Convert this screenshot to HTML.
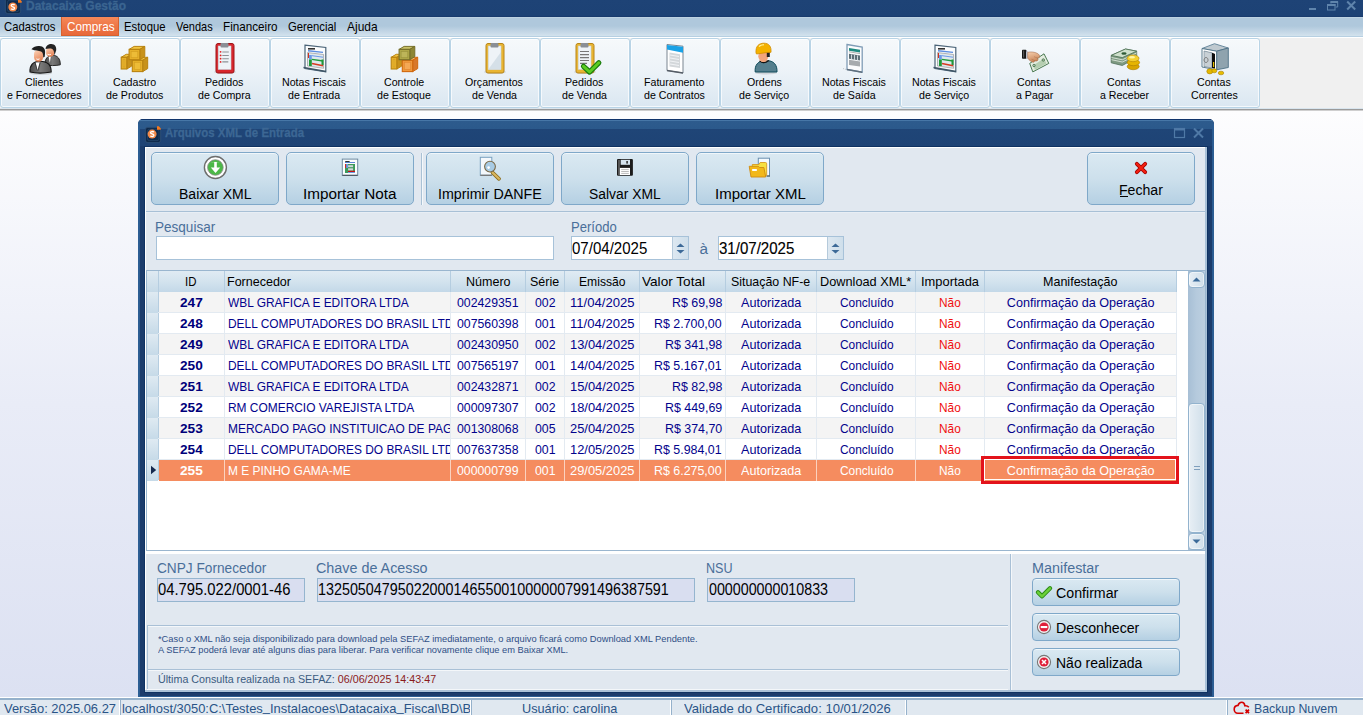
<!DOCTYPE html><html><head><meta charset="utf-8"><style>
*{box-sizing:border-box;margin:0;padding:0}
html,body{width:1363px;height:715px;overflow:hidden;background:#fff}
body{position:relative;font-family:"Liberation Sans",sans-serif;color:#000}
.a{position:absolute}
.t{position:absolute;white-space:nowrap;line-height:1}
svg{position:absolute;overflow:visible}
</style></head><body><div class="a" style="left:0px;top:110px;width:1363px;height:587px;background:linear-gradient(#fdfdfe,#e9ecf7 50%,#dce1f2)"></div>
<div class="a" style="left:0px;top:0px;width:1363px;height:17px;background:linear-gradient(#1e4376,#1d4275 90%,#16386a)"></div>
<svg style="left:4px;top:-3px" width="18" height="18"><rect x="1.3" y="1.3" width="15.4" height="15.4" rx="2.5" fill="#0f2a4c" stroke="#2f527a" stroke-width="0.9"/><rect x="3.5" y="3.3" width="11.5" height="11.3" rx="2" fill="none" stroke="#27496f" stroke-width="0.7"/><circle cx="8.8" cy="10" r="4.5" fill="#f38a4a"/><path d="M10.6 8c-.7-.8-3.4-.9-3.4.6 0 1.5 3.4.9 3.4 2.6 0 1.5-2.7 1.5-3.6.6" stroke="#fff" stroke-width="1.3" fill="none"/><path d="M14 2.3h1.8l1.9 1.9v1.6h-3.7z" fill="#f5781e"/></svg>
<div class="t" style="left:26.00px;top:0.00px;font-size:12.4px;color:#3b6591;font-weight:700;transform:scaleX(0.9679);transform-origin:0 0;-webkit-text-stroke:0.3px #3b6591">Datacaixa Gestão</div>
<svg style="left:1300px;top:0" width="63" height="17"><rect x="9" y="8" width="7" height="2" fill="#5f84ac"/><path d="M31 3.5V1.5h6.7v5.5h-2" fill="none" stroke="#5f84ac" stroke-width="1"/><rect x="30.5" y="1" width="7.5" height="2" fill="#5f84ac"/><rect x="27.5" y="4.5" width="7.5" height="5.5" fill="#1d4275" stroke="#5f84ac" stroke-width="1"/><rect x="27" y="4" width="8.5" height="2" fill="#5f84ac"/><path d="M47.2 1.5l8 8M55.2 1.5l-8 8" stroke="#5f84ac" stroke-width="2"/></svg>
<div class="a" style="left:0px;top:17px;width:1363px;height:19px;background:linear-gradient(#bdd2e2 0px,#bdd2e2 1px,#afc8dc 1px,#afc8dc 9px,#d3e2ed 19px)"></div>
<div class="a" style="left:0px;top:36px;width:1363px;height:1px;background:#b7d0e2"></div>
<div class="a" style="left:0px;top:37px;width:1363px;height:1px;background:#ffffff"></div>
<div class="a" style="left:61px;top:17px;width:58px;height:19px;background:linear-gradient(#f5895a,#ee7646 50%,#e8693a);border:1px solid #d7622f;border-top:none"></div>
<div class="t" style="left:4.40px;top:21.00px;font-size:12.6px;color:#000;font-weight:400;transform:scaleX(0.8954);transform-origin:0 0;">Cadastros</div>
<div class="t" style="left:66.50px;top:21.00px;font-size:12.6px;color:#fff;font-weight:400;transform:scaleX(0.9297);transform-origin:0 0;">Compras</div>
<div class="t" style="left:124.40px;top:21.00px;font-size:12.6px;color:#000;font-weight:400;transform:scaleX(0.8979);transform-origin:0 0;">Estoque</div>
<div class="t" style="left:176.00px;top:21.00px;font-size:12.6px;color:#000;font-weight:400;transform:scaleX(0.8732);transform-origin:0 0;">Vendas</div>
<div class="t" style="left:223.40px;top:21.00px;font-size:12.6px;color:#000;font-weight:400;transform:scaleX(0.9284);transform-origin:0 0;">Financeiro</div>
<div class="t" style="left:288.30px;top:21.00px;font-size:12.6px;color:#000;font-weight:400;transform:scaleX(0.8960);transform-origin:0 0;">Gerencial</div>
<div class="t" style="left:346.90px;top:21.00px;font-size:12.6px;color:#000;font-weight:400;transform:scaleX(0.9498);transform-origin:0 0;">Ajuda</div>
<div class="a" style="left:0px;top:38px;width:1363px;height:71px;background:#f0f0f0"></div>
<div class="a" style="left:0px;top:38px;width:90px;height:70px;border:1px solid #b9d4e6;border-radius:3px;background:linear-gradient(#f6f9fb,#edf3f8 45%,#dae7f1);box-shadow:inset 0 0 0 1px rgba(255,255,255,0.7)"></div>
<div class="t" style="left:24.98px;top:77.00px;font-size:11.5px;color:#000;font-weight:400;transform:scaleX(0.9250);transform-origin:0 0;">Clientes</div>
<div class="t" style="left:6.95px;top:90.00px;font-size:11.5px;color:#000;font-weight:400;transform:scaleX(0.9250);transform-origin:0 0;">e Fornecedores</div>
<div class="a" style="left:90px;top:38px;width:90px;height:70px;border:1px solid #b9d4e6;border-radius:3px;background:linear-gradient(#f6f9fb,#edf3f8 45%,#dae7f1);box-shadow:inset 0 0 0 1px rgba(255,255,255,0.7)"></div>
<div class="t" style="left:112.61px;top:77.00px;font-size:11.5px;color:#000;font-weight:400;transform:scaleX(0.9250);transform-origin:0 0;">Cadastro</div>
<div class="t" style="left:105.52px;top:90.00px;font-size:11.5px;color:#000;font-weight:400;transform:scaleX(0.9250);transform-origin:0 0;">de Produtos</div>
<div class="a" style="left:180px;top:38px;width:90px;height:70px;border:1px solid #b9d4e6;border-radius:3px;background:linear-gradient(#f6f9fb,#edf3f8 45%,#dae7f1);box-shadow:inset 0 0 0 1px rgba(255,255,255,0.7)"></div>
<div class="t" style="left:204.98px;top:77.00px;font-size:11.5px;color:#000;font-weight:400;transform:scaleX(0.9250);transform-origin:0 0;">Pedidos</div>
<div class="t" style="left:197.89px;top:90.00px;font-size:11.5px;color:#000;font-weight:400;transform:scaleX(0.9250);transform-origin:0 0;">de Compra</div>
<div class="a" style="left:270px;top:38px;width:90px;height:70px;border:1px solid #b9d4e6;border-radius:3px;background:linear-gradient(#f6f9fb,#edf3f8 45%,#dae7f1);box-shadow:inset 0 0 0 1px rgba(255,255,255,0.7)"></div>
<div class="t" style="left:282.27px;top:77.00px;font-size:11.5px;color:#000;font-weight:400;transform:scaleX(0.9250);transform-origin:0 0;">Notas Fiscais</div>
<div class="t" style="left:288.18px;top:90.00px;font-size:11.5px;color:#000;font-weight:400;transform:scaleX(0.9250);transform-origin:0 0;">de Entrada</div>
<div class="a" style="left:360px;top:38px;width:90px;height:70px;border:1px solid #b9d4e6;border-radius:3px;background:linear-gradient(#f6f9fb,#edf3f8 45%,#dae7f1);box-shadow:inset 0 0 0 1px rgba(255,255,255,0.7)"></div>
<div class="t" style="left:384.10px;top:77.00px;font-size:11.5px;color:#000;font-weight:400;transform:scaleX(0.9250);transform-origin:0 0;">Controle</div>
<div class="t" style="left:377.29px;top:90.00px;font-size:11.5px;color:#000;font-weight:400;transform:scaleX(0.9250);transform-origin:0 0;">de Estoque</div>
<div class="a" style="left:450px;top:38px;width:90px;height:70px;border:1px solid #b9d4e6;border-radius:3px;background:linear-gradient(#f6f9fb,#edf3f8 45%,#dae7f1);box-shadow:inset 0 0 0 1px rgba(255,255,255,0.7)"></div>
<div class="t" style="left:465.23px;top:77.00px;font-size:11.5px;color:#000;font-weight:400;transform:scaleX(0.9250);transform-origin:0 0;">Orçamentos</div>
<div class="t" style="left:471.72px;top:90.00px;font-size:11.5px;color:#000;font-weight:400;transform:scaleX(0.9250);transform-origin:0 0;">de Venda</div>
<div class="a" style="left:540px;top:38px;width:90px;height:70px;border:1px solid #b9d4e6;border-radius:3px;background:linear-gradient(#f6f9fb,#edf3f8 45%,#dae7f1);box-shadow:inset 0 0 0 1px rgba(255,255,255,0.7)"></div>
<div class="t" style="left:564.98px;top:77.00px;font-size:11.5px;color:#000;font-weight:400;transform:scaleX(0.9250);transform-origin:0 0;">Pedidos</div>
<div class="t" style="left:561.72px;top:90.00px;font-size:11.5px;color:#000;font-weight:400;transform:scaleX(0.9250);transform-origin:0 0;">de Venda</div>
<div class="a" style="left:630px;top:38px;width:90px;height:70px;border:1px solid #b9d4e6;border-radius:3px;background:linear-gradient(#f6f9fb,#edf3f8 45%,#dae7f1);box-shadow:inset 0 0 0 1px rgba(255,255,255,0.7)"></div>
<div class="t" style="left:644.04px;top:77.00px;font-size:11.5px;color:#000;font-weight:400;transform:scaleX(0.9250);transform-origin:0 0;">Faturamento</div>
<div class="t" style="left:643.74px;top:90.00px;font-size:11.5px;color:#000;font-weight:400;transform:scaleX(0.9250);transform-origin:0 0;">de Contratos</div>
<div class="a" style="left:720px;top:38px;width:90px;height:70px;border:1px solid #b9d4e6;border-radius:3px;background:linear-gradient(#f6f9fb,#edf3f8 45%,#dae7f1);box-shadow:inset 0 0 0 1px rgba(255,255,255,0.7)"></div>
<div class="t" style="left:746.76px;top:77.00px;font-size:11.5px;color:#000;font-weight:400;transform:scaleX(0.9250);transform-origin:0 0;">Ordens</div>
<div class="t" style="left:739.07px;top:90.00px;font-size:11.5px;color:#000;font-weight:400;transform:scaleX(0.9250);transform-origin:0 0;">de Serviço</div>
<div class="a" style="left:810px;top:38px;width:90px;height:70px;border:1px solid #b9d4e6;border-radius:3px;background:linear-gradient(#f6f9fb,#edf3f8 45%,#dae7f1);box-shadow:inset 0 0 0 1px rgba(255,255,255,0.7)"></div>
<div class="t" style="left:822.27px;top:77.00px;font-size:11.5px;color:#000;font-weight:400;transform:scaleX(0.9250);transform-origin:0 0;">Notas Fiscais</div>
<div class="t" style="left:832.90px;top:90.00px;font-size:11.5px;color:#000;font-weight:400;transform:scaleX(0.9250);transform-origin:0 0;">de Saída</div>
<div class="a" style="left:900px;top:38px;width:90px;height:70px;border:1px solid #b9d4e6;border-radius:3px;background:linear-gradient(#f6f9fb,#edf3f8 45%,#dae7f1);box-shadow:inset 0 0 0 1px rgba(255,255,255,0.7)"></div>
<div class="t" style="left:912.27px;top:77.00px;font-size:11.5px;color:#000;font-weight:400;transform:scaleX(0.9250);transform-origin:0 0;">Notas Fiscais</div>
<div class="t" style="left:919.07px;top:90.00px;font-size:11.5px;color:#000;font-weight:400;transform:scaleX(0.9250);transform-origin:0 0;">de Serviço</div>
<div class="a" style="left:990px;top:38px;width:90px;height:70px;border:1px solid #b9d4e6;border-radius:3px;background:linear-gradient(#f6f9fb,#edf3f8 45%,#dae7f1);box-shadow:inset 0 0 0 1px rgba(255,255,255,0.7)"></div>
<div class="t" style="left:1017.35px;top:77.00px;font-size:11.5px;color:#000;font-weight:400;transform:scaleX(0.9250);transform-origin:0 0;">Contas</div>
<div class="t" style="left:1015.57px;top:90.00px;font-size:11.5px;color:#000;font-weight:400;transform:scaleX(0.9250);transform-origin:0 0;">a Pagar</div>
<div class="a" style="left:1080px;top:38px;width:90px;height:70px;border:1px solid #b9d4e6;border-radius:3px;background:linear-gradient(#f6f9fb,#edf3f8 45%,#dae7f1);box-shadow:inset 0 0 0 1px rgba(255,255,255,0.7)"></div>
<div class="t" style="left:1107.35px;top:77.00px;font-size:11.5px;color:#000;font-weight:400;transform:scaleX(0.9250);transform-origin:0 0;">Contas</div>
<div class="t" style="left:1099.66px;top:90.00px;font-size:11.5px;color:#000;font-weight:400;transform:scaleX(0.9250);transform-origin:0 0;">a Receber</div>
<div class="a" style="left:1170px;top:38px;width:90px;height:70px;border:1px solid #b9d4e6;border-radius:3px;background:linear-gradient(#f6f9fb,#edf3f8 45%,#dae7f1);box-shadow:inset 0 0 0 1px rgba(255,255,255,0.7)"></div>
<div class="t" style="left:1197.35px;top:77.00px;font-size:11.5px;color:#000;font-weight:400;transform:scaleX(0.9250);transform-origin:0 0;">Contas</div>
<div class="t" style="left:1190.84px;top:90.00px;font-size:11.5px;color:#000;font-weight:400;transform:scaleX(0.9250);transform-origin:0 0;">Correntes</div>
<div class="a" style="left:0px;top:108px;width:1363px;height:1px;background:#d9e5ee"></div>
<div class="a" style="left:0px;top:109px;width:1363px;height:1px;background:#9a9a9a"></div>
<div class="a" style="left:0px;top:110px;width:1363px;height:1px;background:#cfcfcf"></div>
<svg style="left:20px;top:40px" width="50" height="38" viewBox="0 0 50 38">
<defs><linearGradient id="fg1" x1="0" y1="0" x2="0.4" y2="1"><stop offset="0" stop-color="#fdd5ba"/><stop offset="1" stop-color="#e5865a"/></linearGradient>
<linearGradient id="bd1" x1="0" y1="0" x2="1" y2="0"><stop offset="0" stop-color="#4a4a4a"/><stop offset="0.5" stop-color="#7a7a7a"/><stop offset="1" stop-color="#555"/></linearGradient></defs>
<ellipse cx="21" cy="33.3" rx="11" ry="1.6" fill="#b8bcc0" opacity="0.6"/>
<path d="M24.8 25C24.6 19 27.8 15.2 32.5 15.2 37.5 15.2 40.5 19 40.3 24.8 37 25.8 28 25.8 24.8 25z" fill="url(#bd1)" stroke="#1a1a1a" stroke-width="0.9"/>
<path d="M28.6 16.5L29.8 22.7 30.9 16.5z" fill="#fff"/>
<path d="M26.2 10.5C26.2 8 28.3 7.4 30.2 7.4 32.5 7.4 34.2 8.8 34.2 11.5V13.5C34.2 15.5 32.3 16.7 30.2 16.7 28 16.7 26.2 15.3 26.2 13.3z" fill="url(#fg1)"/>
<path d="M27.5 14.3q1.8 .9 3.5 0" stroke="#fff" stroke-width="0.9" fill="none"/>
<path d="M25.6 9C25.8 5.6 28.5 4 31.3 4 34.8 4 36.6 6.8 36.2 10.2L35.2 13.3 34.3 15.2C34.3 11.5 33.6 9.2 31 8.6 29 8.2 27 8.6 25.6 9z" fill="#242424"/>
<path d="M10 32C9.6 25.5 12.8 21.2 20 21.2 27.5 21.2 31.3 25 31.2 32 25 33.2 15 33.2 10 32z" fill="url(#bd1)" stroke="#141414" stroke-width="1.1"/>
<path d="M15.6 22.4L17.6 30.7 19.6 22.4z" fill="#fff"/>
<path d="M15 22.5L17.3 30.5M20.2 22.5L18 30.5" stroke="#222" stroke-width="0.7"/>
<path d="M14 14C14 11 16 10 18.5 10S23.1 11.2 23.1 14V17.5C23.1 20 21 21.7 18.5 21.7S14 20 14 17.5z" fill="url(#fg1)"/>
<path d="M16.3 18.9q1.6 1 3.3 0" stroke="#fff" stroke-width="1" fill="none"/>
<path d="M11.4 9.3C13.5 6.5 16.5 5.8 19.3 6 23.5 6.3 25.4 8.8 25.1 12.5L24.7 16.8 23.2 17.5C23.3 14.5 22.8 12 21 11.4 18.5 10.6 15.5 10.9 11.4 9.3z" fill="#202020"/>
</svg>
<svg style="left:110px;top:40px" width="50" height="38" viewBox="0 0 50 38"><path d="M11.2 17.3L16.2 14.3H21.8L16.8 17.3z" fill="#f2c542" stroke="#b98310" stroke-width="1" stroke-linejoin="round"/><path d="M16.8 17.3L21.8 14.3V26.0L16.8 29z" fill="#c8921a" stroke="#b98310" stroke-width="1" stroke-linejoin="round"/><rect x="11.2" y="17.3" width="5.600000000000001" height="11.7" fill="#e7b12a" stroke="#b98310" stroke-width="1.1"/><rect x="13.2" y="19.3" width="1.6000000000000014" height="7.699999999999999" fill="#f2c542" opacity="0.55" stroke="#c8921a" stroke-width="0.7"/><path d="M22.3 20.3L27.3 17.3H37.7L32.7 20.3z" fill="#f2c542" stroke="#b98310" stroke-width="1" stroke-linejoin="round"/><path d="M32.7 20.3L37.7 17.3V28.6L32.7 31.6z" fill="#c8921a" stroke="#b98310" stroke-width="1" stroke-linejoin="round"/><rect x="22.3" y="20.3" width="10.400000000000002" height="11.3" fill="#e7b12a" stroke="#b98310" stroke-width="1.1"/><rect x="24.3" y="22.3" width="6.400000000000002" height="7.300000000000001" fill="#f2c542" opacity="0.55" stroke="#c8921a" stroke-width="0.7"/><path d="M19.1 9.4L24.1 6.4H34.8L29.799999999999997 9.4z" fill="#f2c542" stroke="#b98310" stroke-width="1" stroke-linejoin="round"/><path d="M29.799999999999997 9.4L34.8 6.4V16.7L29.799999999999997 19.7z" fill="#c8921a" stroke="#b98310" stroke-width="1" stroke-linejoin="round"/><rect x="19.1" y="9.4" width="10.699999999999996" height="10.299999999999999" fill="#e7b12a" stroke="#b98310" stroke-width="1.1"/><rect x="21.1" y="11.4" width="6.699999999999996" height="6.299999999999999" fill="#f2c542" opacity="0.55" stroke="#c8921a" stroke-width="0.7"/></svg>
<svg style="left:200px;top:40px" width="50" height="38" viewBox="0 0 50 38">
<ellipse cx="25" cy="32" rx="11" ry="2" fill="#c8ccd0" opacity="0.7"/>
<rect x="16" y="3.5" width="18" height="29.5" rx="2" fill="#d8262c" stroke="#9e1418" stroke-width="1"/>
<rect x="18.2" y="6" width="12.8" height="23.4" fill="#eef3f7" stroke="#c9d5de" stroke-width="0.6"/>

<circle cx="20.6" cy="11.8" r="0.9" fill="#e02020"/><circle cx="20.6" cy="15.4" r="0.9" fill="#e02020"/><circle cx="20.6" cy="18.7" r="0.9" fill="#e02020"/><circle cx="20.6" cy="21.9" r="0.9" fill="#e02020"/>
<path d="M22.3 12h6.5M22.3 15.5h6.5M22.3 18.7h6.5M22.3 21.9h6" stroke="#8c9296" stroke-width="1.1"/>
<rect x="20.5" y="3" width="8" height="4.5" rx="1" fill="#8a8f96"/></svg>
<svg style="left:290px;top:40px" width="50" height="38" viewBox="0 0 50 38">
<path d="M15 5.2L35.8 7.5V31.8L15 28.5z" fill="#fbfcfd" stroke="#4b6478" stroke-width="1.2"/>
<path d="M13.5 27.5L36 31.5" stroke="#3f5566" stroke-width="1.6"/>
<rect x="18" y="8" width="7" height="1.6" fill="#333"/>
<path d="M18 10.8L33 12.4" stroke="#5d8ee0" stroke-width="1.4"/>
<path d="M17.5 12.6L33.6 14.5V28.3L17.5 26z" fill="#dfe8ee" stroke="#888" stroke-width="0.6"/>
<rect x="19" y="15" width="2.8" height="4.5" fill="#6a9ae8"/>
<rect x="19" y="19.5" width="2.8" height="6.5" fill="#1f9a3a"/>
<rect x="18" y="13" width="1" height="5" fill="#d03020"/>
<path d="M22 19.3L33 21" stroke="#1f9a3a" stroke-width="1.3"/>
<rect x="31.5" y="19.5" width="2" height="5.5" fill="#1f9a3a"/>
<path d="M22 23.5L33 25.8" stroke="#d83a20" stroke-width="1.6"/>
<path d="M22 15.7L33 17.2" stroke="#6a9ae8" stroke-width="1"/>
</svg>
<svg style="left:380px;top:40px" width="50" height="38" viewBox="0 0 50 38"><path d="M11.2 17.3L16.2 14.3H21.8L16.8 17.3z" fill="#f2c542" stroke="#b98310" stroke-width="1" stroke-linejoin="round"/><path d="M16.8 17.3L21.8 14.3V26.0L16.8 29z" fill="#c8921a" stroke="#b98310" stroke-width="1" stroke-linejoin="round"/><rect x="11.2" y="17.3" width="5.600000000000001" height="11.7" fill="#e7b12a" stroke="#b98310" stroke-width="1.1"/><rect x="13.2" y="19.3" width="1.6000000000000014" height="7.699999999999999" fill="#f2c542" opacity="0.55" stroke="#c8921a" stroke-width="0.7"/><path d="M22.3 20.3L27.3 17.3H37.7L32.7 20.3z" fill="#f7b56a" stroke="#d0680e" stroke-width="1" stroke-linejoin="round"/><path d="M32.7 20.3L37.7 17.3V28.6L32.7 31.6z" fill="#d8782a" stroke="#d0680e" stroke-width="1" stroke-linejoin="round"/><rect x="22.3" y="20.3" width="10.400000000000002" height="11.3" fill="#f19a3c" stroke="#d0680e" stroke-width="1.1"/><rect x="24.3" y="22.3" width="6.400000000000002" height="7.300000000000001" fill="#f7b56a" opacity="0.55" stroke="#d8782a" stroke-width="0.7"/><path d="M19.1 9.4L24.1 6.4H34.8L29.799999999999997 9.4z" fill="#c9c168" stroke="#77702a" stroke-width="1" stroke-linejoin="round"/><path d="M29.799999999999997 9.4L34.8 6.4V16.7L29.799999999999997 19.7z" fill="#8d8634" stroke="#77702a" stroke-width="1" stroke-linejoin="round"/><rect x="19.1" y="9.4" width="10.699999999999996" height="10.299999999999999" fill="#b0a848" stroke="#77702a" stroke-width="1.1"/><rect x="21.1" y="11.4" width="6.699999999999996" height="6.299999999999999" fill="#c9c168" opacity="0.55" stroke="#8d8634" stroke-width="0.7"/></svg>
<svg style="left:470px;top:40px" width="50" height="38" viewBox="0 0 50 38">
<ellipse cx="25" cy="32" rx="11" ry="2" fill="#c8ccd0" opacity="0.7"/>
<rect x="16" y="3.5" width="18" height="29.5" rx="2" fill="#e9b532" stroke="#b8861a" stroke-width="1"/>
<rect x="18.2" y="6" width="12.8" height="23.4" fill="#eef3f7" stroke="#c9d5de" stroke-width="0.6"/>
<path d="M18.2 29.4L31 12V29.4z" fill="#d5e0e8"/>
<rect x="20.5" y="3" width="8" height="4.5" rx="1" fill="#8a8f96"/></svg>
<svg style="left:560px;top:40px" width="50" height="38" viewBox="0 0 50 38">
<ellipse cx="25" cy="32" rx="11" ry="2" fill="#c8ccd0" opacity="0.7"/>
<rect x="16" y="3.5" width="18" height="29.5" rx="2" fill="#e9b532" stroke="#b8861a" stroke-width="1"/>
<rect x="18.2" y="6" width="12.8" height="23.4" fill="#eef3f7" stroke="#c9d5de" stroke-width="0.6"/>
<path d="M20 11.5h9M20 14.6h9M20 17.6h9M20 20.5h9M20 23.4h7" stroke="#777" stroke-width="1.1"/>
<rect x="20.5" y="3" width="8" height="4.5" rx="1" fill="#8a8f96"/><path d="M23.5 26.3L29.6 32 38.8 22.8" fill="none" stroke="#177a0c" stroke-width="5.2" stroke-linejoin="round" stroke-linecap="round"/><path d="M23.5 26.3L29.6 32 38.8 22.8" fill="none" stroke="#5ccc22" stroke-width="3" stroke-linejoin="round" stroke-linecap="round"/></svg>
<svg style="left:650px;top:40px" width="50" height="38" viewBox="0 0 50 38">
<path d="M17 4.5L33 6.2V33L17 30.5z" fill="#fff" stroke="#7a8590" stroke-width="1"/>
<path d="M17 5L33 6.8V12.8L17 9.5z" fill="#1aa2e6"/>
<path d="M19.5 12.5L30 14.3V28L19.5 26.5z" fill="#c4c9ce" opacity="0.75"/>
<path d="M20 15l9 1.5M20 18l9 1.5M20 21l9 1.5M20 24l9 1.5" stroke="#f4f6f8" stroke-width="0.9"/>
<path d="M17 30.5L33 33" stroke="#555d66" stroke-width="1.4"/>
</svg>
<svg style="left:740px;top:40px" width="50" height="38" viewBox="0 0 50 38">
<ellipse cx="26" cy="33" rx="11" ry="1.5" fill="#c4c8cc" opacity="0.7"/>
<path d="M15.2 32C14.5 25 18 20.5 26 20.5S37.3 25 37 32z" fill="#557f8e" stroke="#0e4b5a" stroke-width="1"/>
<path d="M19.5 20.8Q23.5 24.5 28.8 20.5" stroke="#111" stroke-width="1.1" fill="#f5c09a"/>
<ellipse cx="23.3" cy="16.3" rx="5" ry="5.6" fill="#f3a47b"/>
<rect x="26.8" y="12" width="3" height="5" fill="#222"/>
<path d="M16 12.8C15.5 6 19 3.2 24 3.2S31.5 6.5 31 12.3L27 12.5 16.5 14z" fill="#f4b200" stroke="#d08c00" stroke-width="0.8"/>
<path d="M19 6.5Q21 4.5 24 4.8" stroke="#fff5a0" stroke-width="1.2" fill="none"/>
</svg>
<svg style="left:830px;top:40px" width="50" height="38" viewBox="0 0 50 38">
<path d="M13 28.5L18 30" stroke="#c0c4c8" stroke-width="1" stroke-dasharray="1 1"/>
<path d="M17 4.5L32.2 7V32.2L17 29.5z" fill="#fbfcfd" stroke="#7f9cb6" stroke-width="1.3"/>
<path d="M17 29.5L32.2 32.2" stroke="#5e6e7c" stroke-width="1.5"/>
<path d="M19 8L30 9.8V12.5L19 10.8z" fill="#1e8a80"/>
<path d="M19 11.8L30 13.6" stroke="#999" stroke-width="0.8"/>
<path d="M19 13.8L30 15.6V20.5L19 18.8z" fill="#5c6e76"/>
<path d="M21.5 14.5V19.5M24.5 15V20M27.5 15.5V20.5" stroke="#d8e0e4" stroke-width="0.9"/>
<path d="M19 19.8L30 21.6V26.6L19 25z" fill="#a7abae"/>
</svg>
<svg style="left:920px;top:40px" width="50" height="38" viewBox="0 0 50 38">
<path d="M15 5.2L35.8 7.5V31.8L15 28.5z" fill="#fbfcfd" stroke="#4b6478" stroke-width="1.2"/>
<path d="M13.5 27.5L36 31.5" stroke="#3f5566" stroke-width="1.6"/>
<rect x="18" y="8" width="7" height="1.6" fill="#333"/>
<path d="M18 10.8L33 12.4" stroke="#5d8ee0" stroke-width="1.4"/>
<path d="M17.5 12.6L33.6 14.5V28.3L17.5 26z" fill="#dfe8ee" stroke="#888" stroke-width="0.6"/>
<rect x="19" y="15" width="2.8" height="4.5" fill="#6a9ae8"/>
<rect x="19" y="19.5" width="2.8" height="6.5" fill="#1f9a3a"/>
<rect x="18" y="13" width="1" height="5" fill="#d03020"/>
<path d="M22 19.3L33 21" stroke="#1f9a3a" stroke-width="1.3"/>
<rect x="31.5" y="19.5" width="2" height="5.5" fill="#1f9a3a"/>
<path d="M22 23.5L33 25.8" stroke="#d83a20" stroke-width="1.6"/>
<path d="M22 15.7L33 17.2" stroke="#6a9ae8" stroke-width="1"/>
</svg>
<svg style="left:1010px;top:40px" width="50" height="38" viewBox="0 0 50 38">
<path d="M19.7 23.4L34 13.8 38.8 23.4 22.8 31.9z" fill="#e3ecdf" stroke="#4b7a52" stroke-width="1"/>
<path d="M23 25.5L34 18.5 36.5 23.5 25 29.8z" fill="#a9c7a4" opacity="0.8"/>
<circle cx="24" cy="25.5" r="1.2" fill="none" stroke="#3f6a45" stroke-width="0.8"/>
<circle cx="33.3" cy="20" r="1.2" fill="none" stroke="#3f6a45" stroke-width="0.8"/>
<defs><linearGradient id="hg1" x1="0" y1="0" x2="0.3" y2="1"><stop offset="0" stop-color="#f6cfae"/><stop offset="1" stop-color="#c98558"/></linearGradient></defs>
<rect x="12" y="9.8" width="4.4" height="9" rx="0.8" fill="#151515"/>
<rect x="13" y="10.5" width="1.2" height="7" fill="#555"/>
<rect x="16.3" y="11.6" width="1.5" height="6.6" fill="#e8eef4" stroke="#99a" stroke-width="0.4"/>
<path d="M17.7 12.3C20.5 11.6 24.5 11.9 27.2 13.3 28.9 14.2 29.9 15.6 29.6 16.9 29.3 18 28.2 18.2 27.3 17.9 28.3 18.8 28.2 20.3 27 20.9 26.2 21.3 25.2 21.1 24.5 20.7 24.8 21.6 24.1 22.3 23 22.2 21.2 22 19.2 20.2 17.7 18.3z" fill="url(#hg1)" stroke="#9a6040" stroke-width="0.5"/>
<path d="M24.5 20.6C23.5 20 22.5 19.5 21.5 19.2M27.2 17.9C26 17.6 25 17.2 24 16.6" stroke="#a86a48" stroke-width="0.5" fill="none"/>
</svg>
<svg style="left:1100px;top:40px" width="50" height="38" viewBox="0 0 50 38">
<path d="M11.2 15.4L25.5 9 36.7 11.2V17.5L22.3 25.5 11.2 22.8z" fill="#7e9a82" stroke="#51705a" stroke-width="0.8"/>
<path d="M11.2 15.4L25.5 9 36.7 11.2 22.3 17.6z" fill="#cfe0cc" stroke="#4b7052" stroke-width="0.8"/>
<path d="M11.5 17.5L22.3 19.8 36.5 13M11.5 19.7L22.3 22 36.5 15.2" stroke="#e8f0e6" stroke-width="0.8" fill="none"/>
<ellipse cx="24" cy="13.5" rx="2.6" ry="1.2" fill="#2e5a36"/>
<ellipse cx="33.2" cy="26.5" rx="6" ry="3.2" fill="#d9a500" stroke="#a87a00" stroke-width="0.6"/>
<ellipse cx="33.4" cy="22.5" rx="6.2" ry="3.2" fill="#e6b400" stroke="#a87a00" stroke-width="0.6"/>
<ellipse cx="33" cy="18.3" rx="6" ry="3.4" fill="#f5d030" stroke="#b08200" stroke-width="0.6"/>
<ellipse cx="32" cy="17.3" rx="3" ry="1.3" fill="#fff3a0"/>
</svg>
<svg style="left:1190px;top:40px" width="50" height="38" viewBox="0 0 50 38">
<path d="M12 8.5L24.5 3.7 38.3 8 26.6 11.2z" fill="#bfc9cf" stroke="#5d8096" stroke-width="0.9"/>
<path d="M26.6 11.2L38.3 8V27.5L26.6 29.8z" fill="#8fa3ae" stroke="#4d7085" stroke-width="0.9"/>
<path d="M12 8.5L26.6 11.2V29.8L12 27z" fill="#ffffff" stroke="#4d7085" stroke-width="0.9"/>
<path d="M14 11L22 12.8 25 14V28.5L22 28 14 26.5z" fill="#98a6ae"/>
<path d="M14 11L22 12.8V28L14 26.5z" fill="#c8d0d5" stroke="#6a8090" stroke-width="0.6"/>
<path d="M22 12.8L25 14V28.5L22 28z" fill="#0e0e0e"/>
<path d="M16 17.5a2 2.5 0 1 0 0.1 0z" fill="none" stroke="#777" stroke-width="0.9"/>
<rect x="23" y="22" width="1.2" height="5" fill="#e8c000"/>
<ellipse cx="19.8" cy="31.3" rx="3" ry="2.6" fill="#e4b800" stroke="#a88200" stroke-width="0.6"/>
<ellipse cx="24.3" cy="30.8" rx="2.5" ry="2" fill="#e8bc00" stroke="#a88200" stroke-width="0.6"/>
<ellipse cx="31" cy="33" rx="2.8" ry="1.8" fill="#e8bc00" stroke="#a88200" stroke-width="0.6"/>
</svg>
<div class="a" style="left:138px;top:119px;width:1076px;height:579px;background:#1b3c6c;border-radius:5px 5px 0 0"></div>
<div class="a" style="left:138px;top:119px;width:1076px;height:27px;border-radius:5px 5px 0 0;background:linear-gradient(#10346a 0px,#10346a 1px,#4878a8 1px,#4676a6 2px,#2d5b8d 2px,#2b598b 10px,#1f4577 10px,#1e4375 27px)"></div>
<div class="a" style="left:145px;top:146px;width:1062px;height:1px;background:#0f3262"></div>
<div class="a" style="left:138px;top:124px;width:2px;height:574px;background:linear-gradient(90deg,#2d5f95,#2a5a8f)"></div>
<div class="a" style="left:1212px;top:124px;width:2px;height:574px;background:linear-gradient(90deg,#2a5a8f,#2d5f95)"></div>
<div class="a" style="left:138px;top:696px;width:1076px;height:2px;background:#2d5f95"></div>
<div class="a" style="left:144px;top:146px;width:1px;height:546px;background:#0f3262"></div>
<div class="a" style="left:1207px;top:146px;width:1px;height:546px;background:#0f3262"></div>
<div class="a" style="left:144px;top:692px;width:1064px;height:1px;background:#0f3262"></div>
<svg style="left:144px;top:126px" width="18" height="18"><rect x="1.3" y="1.3" width="15.4" height="15.4" rx="2.5" fill="#0f2a4c" stroke="#2f527a" stroke-width="0.9"/><rect x="3.5" y="3.3" width="11.5" height="11.3" rx="2" fill="none" stroke="#27496f" stroke-width="0.7"/><circle cx="8.1" cy="8.1" r="4.5" fill="#f38a4a"/><path d="M9.9 6.1c-.7-.8-3.4-.9-3.4.6 0 1.5 3.4.9 3.4 2.6 0 1.5-2.7 1.5-3.6.6" stroke="#fff" stroke-width="1.3" fill="none"/><path d="M13 0.3h1.8l1.9 1.9v1.6h-3.7z" fill="#f5781e"/></svg>
<div class="t" style="left:165.30px;top:127.00px;font-size:12.4px;color:#3c6794;font-weight:700;transform:scaleX(0.9232);transform-origin:0 0;-webkit-text-stroke:0.3px #3c6794">Arquivos XML de Entrada</div>
<svg style="left:1170px;top:125px" width="40" height="16"><rect x="4.5" y="3.5" width="10" height="9" fill="none" stroke="#4f79a6" stroke-width="1.2"/><rect x="4.5" y="3.5" width="10" height="2" fill="#4f79a6"/><path d="M24 3.5l9 9M33 3.5l-9 9" stroke="#4f79a6" stroke-width="2"/></svg>
<div class="a" style="left:145px;top:147px;width:1062px;height:545px;background:#e1e8f0"></div>
<div class="a" style="left:145px;top:147px;width:1062px;height:1px;background:#ffffff"></div>
<div class="a" style="left:145px;top:147px;width:1px;height:545px;background:#ffffff"></div>
<div class="a" style="left:1205px;top:147px;width:2px;height:545px;background:#a9c1d8"></div>
<div class="a" style="left:145px;top:690px;width:1062px;height:2px;background:#a9c1d8"></div>
<!--CLIENT-->
<div class="a" style="left:151px;top:152px;width:128px;height:53px;border:1px solid #7fa8c9;border-radius:5px;background:linear-gradient(#dae9f2,#cde0ec 50%,#b5d0e3);box-shadow:inset 0 1px 0 #f0f6fa"></div>
<div class="t" style="left:179.20px;top:186.00px;font-size:15.5px;color:#000;font-weight:400;transform:scaleX(0.9061);transform-origin:0 0;">Baixar XML</div>
<div class="a" style="left:286px;top:152px;width:128px;height:53px;border:1px solid #7fa8c9;border-radius:5px;background:linear-gradient(#dae9f2,#cde0ec 50%,#b5d0e3);box-shadow:inset 0 1px 0 #f0f6fa"></div>
<div class="t" style="left:302.90px;top:186.00px;font-size:15.5px;color:#000;font-weight:400;transform:scaleX(0.9866);transform-origin:0 0;">Importar Nota</div>
<div class="a" style="left:426px;top:152px;width:128px;height:53px;border:1px solid #7fa8c9;border-radius:5px;background:linear-gradient(#dae9f2,#cde0ec 50%,#b5d0e3);box-shadow:inset 0 1px 0 #f0f6fa"></div>
<div class="t" style="left:438.00px;top:186.00px;font-size:15.5px;color:#000;font-weight:400;transform:scaleX(0.9201);transform-origin:0 0;">Imprimir DANFE</div>
<div class="a" style="left:561px;top:152px;width:128px;height:53px;border:1px solid #7fa8c9;border-radius:5px;background:linear-gradient(#dae9f2,#cde0ec 50%,#b5d0e3);box-shadow:inset 0 1px 0 #f0f6fa"></div>
<div class="t" style="left:589.00px;top:186.00px;font-size:15.5px;color:#000;font-weight:400;transform:scaleX(0.8949);transform-origin:0 0;">Salvar XML</div>
<div class="a" style="left:696px;top:152px;width:128px;height:53px;border:1px solid #7fa8c9;border-radius:5px;background:linear-gradient(#dae9f2,#cde0ec 50%,#b5d0e3);box-shadow:inset 0 1px 0 #f0f6fa"></div>
<div class="t" style="left:714.80px;top:186.00px;font-size:15.5px;color:#000;font-weight:400;transform:scaleX(0.9681);transform-origin:0 0;">Importar XML</div>
<div class="a" style="left:1087px;top:152px;width:108px;height:53px;border:1px solid #7fa8c9;border-radius:5px;background:linear-gradient(#dae9f2,#cde0ec 50%,#b5d0e3);box-shadow:inset 0 1px 0 #f0f6fa"></div>
<div class="t" style="left:1119.20px;top:182.00px;font-size:15.5px;color:#000;font-weight:400;transform:scaleX(0.9098);transform-origin:0 0;">Fechar</div>
<div class="a" style="left:1120px;top:196px;width:8px;height:1px;background:#000"></div>
<div class="a" style="left:421px;top:153px;width:1px;height:52px;background:#aac1d5"></div>
<div class="a" style="left:422px;top:153px;width:1px;height:52px;background:#f4f8fb"></div>
<div class="a" style="left:146px;top:211px;width:1059px;height:1px;background:#a8c0d6"></div>
<div class="a" style="left:146px;top:212px;width:1059px;height:1px;background:#e8eef5"></div>
<div class="t" style="left:155.40px;top:219.00px;font-size:15.3px;color:#4a6f9a;font-weight:400;transform:scaleX(0.8849);transform-origin:0 0;">Pesquisar</div>
<div class="t" style="left:570.50px;top:219.00px;font-size:15.3px;color:#4a6f9a;font-weight:400;transform:scaleX(0.8548);transform-origin:0 0;">Período</div>
<div class="a" style="left:156px;top:236px;width:398px;height:24px;background:#fff;border:1px solid #a7c2d9"></div>
<div class="a" style="left:571px;top:236px;width:118px;height:24px;background:#fff;border:1px solid #a7c2d9"></div>
<div class="a" style="left:672px;top:237px;width:16px;height:22px;background:linear-gradient(90deg,#dde8f1,#cfdfeb);border-left:1px solid #b5cadb"></div>
<svg style="left:676px;top:243px" width="9" height="11"><path d="M0.5 4L4.5 0.5 8.5 4z M0.5 7L4.5 10.5 8.5 7z" fill="#3d6a98"/></svg>
<div class="t" style="left:572.30px;top:241.00px;font-size:15.6px;color:#000;font-weight:400;transform:scaleX(0.9648);transform-origin:0 0;">07/04/2025</div>
<div class="a" style="left:718px;top:236px;width:126px;height:24px;background:#fff;border:1px solid #a7c2d9"></div>
<div class="a" style="left:827px;top:237px;width:16px;height:22px;background:linear-gradient(90deg,#dde8f1,#cfdfeb);border-left:1px solid #b5cadb"></div>
<svg style="left:831px;top:243px" width="9" height="11"><path d="M0.5 4L4.5 0.5 8.5 4z M0.5 7L4.5 10.5 8.5 7z" fill="#3d6a98"/></svg>
<div class="t" style="left:719.30px;top:241.00px;font-size:15.6px;color:#000;font-weight:400;transform:scaleX(0.9648);transform-origin:0 0;-webkit-text-stroke:0.15px #000">31/07/2025</div>
<div class="t" style="left:699.60px;top:241.00px;font-size:15.3px;color:#4a6f9a;font-weight:400;">à</div>
<div class="a" style="left:146px;top:270px;width:1060px;height:281px;background:#fff;border:1px solid #9ab6cf"></div>
<div class="a" style="left:147px;top:271px;width:1029px;height:21px;background:linear-gradient(#e0ebf3,#d3e3ee 50%,#c3d8e8)"></div>
<div class="a" style="left:158px;top:271px;width:1px;height:21px;background:#b5cde0"></div>
<div class="a" style="left:224px;top:271px;width:1px;height:21px;background:#b5cde0"></div>
<div class="a" style="left:450px;top:271px;width:1px;height:21px;background:#b5cde0"></div>
<div class="a" style="left:525px;top:271px;width:1px;height:21px;background:#b5cde0"></div>
<div class="a" style="left:564px;top:271px;width:1px;height:21px;background:#b5cde0"></div>
<div class="a" style="left:639px;top:271px;width:1px;height:21px;background:#b5cde0"></div>
<div class="a" style="left:725px;top:271px;width:1px;height:21px;background:#b5cde0"></div>
<div class="a" style="left:816px;top:271px;width:1px;height:21px;background:#b5cde0"></div>
<div class="a" style="left:915px;top:271px;width:1px;height:21px;background:#b5cde0"></div>
<div class="a" style="left:984px;top:271px;width:1px;height:21px;background:#b5cde0"></div>
<div class="a" style="left:1176px;top:271px;width:1px;height:21px;background:#b5cde0"></div>
<div class="a" style="left:158px;top:292px;width:1px;height:188px;background:#b5cde0"></div>
<div class="a" style="left:147px;top:271px;width:11px;height:21px;background:linear-gradient(#dfeaf2,#c6dae8)"></div>
<div class="a" style="left:147px;top:292px;width:11px;height:21px;background:linear-gradient(#dfeaf2,#c6dae8)"></div>
<div class="a" style="left:147px;top:313px;width:11px;height:21px;background:linear-gradient(#dfeaf2,#c6dae8)"></div>
<div class="a" style="left:147px;top:334px;width:11px;height:21px;background:linear-gradient(#dfeaf2,#c6dae8)"></div>
<div class="a" style="left:147px;top:355px;width:11px;height:21px;background:linear-gradient(#dfeaf2,#c6dae8)"></div>
<div class="a" style="left:147px;top:376px;width:11px;height:21px;background:linear-gradient(#dfeaf2,#c6dae8)"></div>
<div class="a" style="left:147px;top:397px;width:11px;height:21px;background:linear-gradient(#dfeaf2,#c6dae8)"></div>
<div class="a" style="left:147px;top:418px;width:11px;height:21px;background:linear-gradient(#dfeaf2,#c6dae8)"></div>
<div class="a" style="left:147px;top:439px;width:11px;height:21px;background:linear-gradient(#dfeaf2,#c6dae8)"></div>
<div class="a" style="left:147px;top:460px;width:11px;height:21px;background:linear-gradient(#dfeaf2,#c6dae8)"></div>
<div class="t" style="left:185.20px;top:276.00px;font-size:12.6px;color:#000;font-weight:400;transform:scaleX(0.9052);transform-origin:0 0;">ID</div>
<div class="t" style="left:227.40px;top:276.00px;font-size:12.6px;color:#000;font-weight:400;transform:scaleX(0.9937);transform-origin:0 0;">Fornecedor</div>
<div class="t" style="left:466.00px;top:276.00px;font-size:12.6px;color:#000;font-weight:400;transform:scaleX(0.9956);transform-origin:0 0;">Número</div>
<div class="t" style="left:530.40px;top:276.00px;font-size:12.6px;color:#000;font-weight:400;transform:scaleX(0.9896);transform-origin:0 0;">Série</div>
<div class="t" style="left:579.10px;top:276.00px;font-size:12.6px;color:#000;font-weight:400;transform:scaleX(0.9628);transform-origin:0 0;">Emissão</div>
<div class="t" style="left:641.70px;top:276.00px;font-size:12.6px;color:#000;font-weight:400;transform:scaleX(1.0798);transform-origin:0 0;">Valor Total</div>
<div class="t" style="left:731.30px;top:276.00px;font-size:12.6px;color:#000;font-weight:400;transform:scaleX(0.9839);transform-origin:0 0;">Situação NF-e</div>
<div class="t" style="left:820.00px;top:276.00px;font-size:12.6px;color:#000;font-weight:400;transform:scaleX(1.0109);transform-origin:0 0;">Download XML*</div>
<div class="t" style="left:921.40px;top:276.00px;font-size:12.6px;color:#000;font-weight:400;transform:scaleX(1.0229);transform-origin:0 0;">Importada</div>
<div class="t" style="left:1043.20px;top:276.00px;font-size:12.6px;color:#000;font-weight:400;transform:scaleX(0.9946);transform-origin:0 0;">Manifestação</div>
<div class="a" style="left:159px;top:292px;width:1017px;height:21px;background:#f4f4f4"></div>
<div class="a" style="left:158px;top:312px;width:1018px;height:1px;background:#e3eaf1"></div>
<div class="a" style="left:224px;top:292px;width:1px;height:21px;background:#e3eaf1"></div>
<div class="a" style="left:450px;top:292px;width:1px;height:21px;background:#e3eaf1"></div>
<div class="a" style="left:525px;top:292px;width:1px;height:21px;background:#e3eaf1"></div>
<div class="a" style="left:564px;top:292px;width:1px;height:21px;background:#e3eaf1"></div>
<div class="a" style="left:639px;top:292px;width:1px;height:21px;background:#e3eaf1"></div>
<div class="a" style="left:725px;top:292px;width:1px;height:21px;background:#e3eaf1"></div>
<div class="a" style="left:816px;top:292px;width:1px;height:21px;background:#e3eaf1"></div>
<div class="a" style="left:915px;top:292px;width:1px;height:21px;background:#e3eaf1"></div>
<div class="a" style="left:984px;top:292px;width:1px;height:21px;background:#e3eaf1"></div>
<div class="a" style="left:1176px;top:292px;width:1px;height:21px;background:#e3eaf1"></div>
<div class="t" style="left:179.60px;top:297.00px;font-size:12.6px;color:#00007a;font-weight:700;transform:scaleX(1.0849);transform-origin:0 0;">247</div>
<div class="a" style="left:225px;top:293.00px;width:225px;height:18.9px;overflow:hidden"><div class="t" style="left:2.80px;top:4px;font-size:12.6px;color:#03038c;font-weight:400;transform:scaleX(0.9470);transform-origin:0 0;">WBL GRAFICA E EDITORA LTDA</div></div>
<div class="t" style="left:457.23px;top:297.00px;font-size:12.6px;color:#03038c;font-weight:400;transform:scaleX(0.9760);transform-origin:0 0;">002429351</div>
<div class="t" style="left:534.74px;top:297.00px;font-size:12.6px;color:#03038c;font-weight:400;transform:scaleX(0.9760);transform-origin:0 0;">002</div>
<div class="t" style="left:569.75px;top:297.00px;font-size:12.6px;color:#03038c;font-weight:400;transform:scaleX(1.0385);transform-origin:0 0;">11/04/2025</div>
<div class="t" style="left:671.64px;top:297.00px;font-size:12.6px;color:#03038c;font-weight:400;transform:scaleX(0.9850);transform-origin:0 0;">R$ 69,98</div>
<div class="t" style="left:741.00px;top:297.00px;font-size:12.6px;color:#03038c;font-weight:400;transform:scaleX(1.0030);transform-origin:0 0;">Autorizada</div>
<div class="t" style="left:839.70px;top:297.00px;font-size:12.6px;color:#03038c;font-weight:400;transform:scaleX(0.9450);transform-origin:0 0;">Concluído</div>
<div class="t" style="left:938.80px;top:297.00px;font-size:12.6px;color:#f01010;font-weight:400;transform:scaleX(0.9433);transform-origin:0 0;">Não</div>
<div class="t" style="left:1006.80px;top:297.00px;font-size:12.6px;color:#03038c;font-weight:400;">Confirmação da Operação</div>
<div class="a" style="left:159px;top:313px;width:1017px;height:21px;background:#ffffff"></div>
<div class="a" style="left:158px;top:333px;width:1018px;height:1px;background:#e3eaf1"></div>
<div class="a" style="left:224px;top:313px;width:1px;height:21px;background:#e3eaf1"></div>
<div class="a" style="left:450px;top:313px;width:1px;height:21px;background:#e3eaf1"></div>
<div class="a" style="left:525px;top:313px;width:1px;height:21px;background:#e3eaf1"></div>
<div class="a" style="left:564px;top:313px;width:1px;height:21px;background:#e3eaf1"></div>
<div class="a" style="left:639px;top:313px;width:1px;height:21px;background:#e3eaf1"></div>
<div class="a" style="left:725px;top:313px;width:1px;height:21px;background:#e3eaf1"></div>
<div class="a" style="left:816px;top:313px;width:1px;height:21px;background:#e3eaf1"></div>
<div class="a" style="left:915px;top:313px;width:1px;height:21px;background:#e3eaf1"></div>
<div class="a" style="left:984px;top:313px;width:1px;height:21px;background:#e3eaf1"></div>
<div class="a" style="left:1176px;top:313px;width:1px;height:21px;background:#e3eaf1"></div>
<div class="t" style="left:179.60px;top:318.00px;font-size:12.6px;color:#00007a;font-weight:700;transform:scaleX(1.0849);transform-origin:0 0;">248</div>
<div class="a" style="left:225px;top:314.00px;width:225px;height:18.9px;overflow:hidden"><div class="t" style="left:2.80px;top:4px;font-size:12.6px;color:#03038c;font-weight:400;transform:scaleX(0.9470);transform-origin:0 0;">DELL COMPUTADORES DO BRASIL LTDA</div></div>
<div class="t" style="left:457.23px;top:318.00px;font-size:12.6px;color:#03038c;font-weight:400;transform:scaleX(0.9760);transform-origin:0 0;">007560398</div>
<div class="t" style="left:534.74px;top:318.00px;font-size:12.6px;color:#03038c;font-weight:400;transform:scaleX(0.9760);transform-origin:0 0;">001</div>
<div class="t" style="left:569.75px;top:318.00px;font-size:12.6px;color:#03038c;font-weight:400;transform:scaleX(1.0385);transform-origin:0 0;">11/04/2025</div>
<div class="t" style="left:654.40px;top:318.00px;font-size:12.6px;color:#03038c;font-weight:400;transform:scaleX(0.9850);transform-origin:0 0;">R$ 2.700,00</div>
<div class="t" style="left:741.00px;top:318.00px;font-size:12.6px;color:#03038c;font-weight:400;transform:scaleX(1.0030);transform-origin:0 0;">Autorizada</div>
<div class="t" style="left:839.70px;top:318.00px;font-size:12.6px;color:#03038c;font-weight:400;transform:scaleX(0.9450);transform-origin:0 0;">Concluído</div>
<div class="t" style="left:938.80px;top:318.00px;font-size:12.6px;color:#f01010;font-weight:400;transform:scaleX(0.9433);transform-origin:0 0;">Não</div>
<div class="t" style="left:1006.80px;top:318.00px;font-size:12.6px;color:#03038c;font-weight:400;">Confirmação da Operação</div>
<div class="a" style="left:159px;top:334px;width:1017px;height:21px;background:#f4f4f4"></div>
<div class="a" style="left:158px;top:354px;width:1018px;height:1px;background:#e3eaf1"></div>
<div class="a" style="left:224px;top:334px;width:1px;height:21px;background:#e3eaf1"></div>
<div class="a" style="left:450px;top:334px;width:1px;height:21px;background:#e3eaf1"></div>
<div class="a" style="left:525px;top:334px;width:1px;height:21px;background:#e3eaf1"></div>
<div class="a" style="left:564px;top:334px;width:1px;height:21px;background:#e3eaf1"></div>
<div class="a" style="left:639px;top:334px;width:1px;height:21px;background:#e3eaf1"></div>
<div class="a" style="left:725px;top:334px;width:1px;height:21px;background:#e3eaf1"></div>
<div class="a" style="left:816px;top:334px;width:1px;height:21px;background:#e3eaf1"></div>
<div class="a" style="left:915px;top:334px;width:1px;height:21px;background:#e3eaf1"></div>
<div class="a" style="left:984px;top:334px;width:1px;height:21px;background:#e3eaf1"></div>
<div class="a" style="left:1176px;top:334px;width:1px;height:21px;background:#e3eaf1"></div>
<div class="t" style="left:179.60px;top:339.00px;font-size:12.6px;color:#00007a;font-weight:700;transform:scaleX(1.0849);transform-origin:0 0;">249</div>
<div class="a" style="left:225px;top:335.00px;width:225px;height:18.9px;overflow:hidden"><div class="t" style="left:2.80px;top:4px;font-size:12.6px;color:#03038c;font-weight:400;transform:scaleX(0.9470);transform-origin:0 0;">WBL GRAFICA E EDITORA LTDA</div></div>
<div class="t" style="left:457.23px;top:339.00px;font-size:12.6px;color:#03038c;font-weight:400;transform:scaleX(0.9760);transform-origin:0 0;">002430950</div>
<div class="t" style="left:534.74px;top:339.00px;font-size:12.6px;color:#03038c;font-weight:400;transform:scaleX(0.9760);transform-origin:0 0;">002</div>
<div class="t" style="left:569.75px;top:339.00px;font-size:12.6px;color:#03038c;font-weight:400;transform:scaleX(1.0233);transform-origin:0 0;">13/04/2025</div>
<div class="t" style="left:664.75px;top:339.00px;font-size:12.6px;color:#03038c;font-weight:400;transform:scaleX(0.9850);transform-origin:0 0;">R$ 341,98</div>
<div class="t" style="left:741.00px;top:339.00px;font-size:12.6px;color:#03038c;font-weight:400;transform:scaleX(1.0030);transform-origin:0 0;">Autorizada</div>
<div class="t" style="left:839.70px;top:339.00px;font-size:12.6px;color:#03038c;font-weight:400;transform:scaleX(0.9450);transform-origin:0 0;">Concluído</div>
<div class="t" style="left:938.80px;top:339.00px;font-size:12.6px;color:#f01010;font-weight:400;transform:scaleX(0.9433);transform-origin:0 0;">Não</div>
<div class="t" style="left:1006.80px;top:339.00px;font-size:12.6px;color:#03038c;font-weight:400;">Confirmação da Operação</div>
<div class="a" style="left:159px;top:355px;width:1017px;height:21px;background:#ffffff"></div>
<div class="a" style="left:158px;top:375px;width:1018px;height:1px;background:#e3eaf1"></div>
<div class="a" style="left:224px;top:355px;width:1px;height:21px;background:#e3eaf1"></div>
<div class="a" style="left:450px;top:355px;width:1px;height:21px;background:#e3eaf1"></div>
<div class="a" style="left:525px;top:355px;width:1px;height:21px;background:#e3eaf1"></div>
<div class="a" style="left:564px;top:355px;width:1px;height:21px;background:#e3eaf1"></div>
<div class="a" style="left:639px;top:355px;width:1px;height:21px;background:#e3eaf1"></div>
<div class="a" style="left:725px;top:355px;width:1px;height:21px;background:#e3eaf1"></div>
<div class="a" style="left:816px;top:355px;width:1px;height:21px;background:#e3eaf1"></div>
<div class="a" style="left:915px;top:355px;width:1px;height:21px;background:#e3eaf1"></div>
<div class="a" style="left:984px;top:355px;width:1px;height:21px;background:#e3eaf1"></div>
<div class="a" style="left:1176px;top:355px;width:1px;height:21px;background:#e3eaf1"></div>
<div class="t" style="left:179.60px;top:360.00px;font-size:12.6px;color:#00007a;font-weight:700;transform:scaleX(1.0849);transform-origin:0 0;">250</div>
<div class="a" style="left:225px;top:356.00px;width:225px;height:18.9px;overflow:hidden"><div class="t" style="left:2.80px;top:4px;font-size:12.6px;color:#03038c;font-weight:400;transform:scaleX(0.9470);transform-origin:0 0;">DELL COMPUTADORES DO BRASIL LTDA</div></div>
<div class="t" style="left:457.23px;top:360.00px;font-size:12.6px;color:#03038c;font-weight:400;transform:scaleX(0.9760);transform-origin:0 0;">007565197</div>
<div class="t" style="left:534.74px;top:360.00px;font-size:12.6px;color:#03038c;font-weight:400;transform:scaleX(0.9760);transform-origin:0 0;">001</div>
<div class="t" style="left:569.75px;top:360.00px;font-size:12.6px;color:#03038c;font-weight:400;transform:scaleX(1.0233);transform-origin:0 0;">14/04/2025</div>
<div class="t" style="left:654.40px;top:360.00px;font-size:12.6px;color:#03038c;font-weight:400;transform:scaleX(0.9850);transform-origin:0 0;">R$ 5.167,01</div>
<div class="t" style="left:741.00px;top:360.00px;font-size:12.6px;color:#03038c;font-weight:400;transform:scaleX(1.0030);transform-origin:0 0;">Autorizada</div>
<div class="t" style="left:839.70px;top:360.00px;font-size:12.6px;color:#03038c;font-weight:400;transform:scaleX(0.9450);transform-origin:0 0;">Concluído</div>
<div class="t" style="left:938.80px;top:360.00px;font-size:12.6px;color:#f01010;font-weight:400;transform:scaleX(0.9433);transform-origin:0 0;">Não</div>
<div class="t" style="left:1006.80px;top:360.00px;font-size:12.6px;color:#03038c;font-weight:400;">Confirmação da Operação</div>
<div class="a" style="left:159px;top:376px;width:1017px;height:21px;background:#f4f4f4"></div>
<div class="a" style="left:158px;top:396px;width:1018px;height:1px;background:#e3eaf1"></div>
<div class="a" style="left:224px;top:376px;width:1px;height:21px;background:#e3eaf1"></div>
<div class="a" style="left:450px;top:376px;width:1px;height:21px;background:#e3eaf1"></div>
<div class="a" style="left:525px;top:376px;width:1px;height:21px;background:#e3eaf1"></div>
<div class="a" style="left:564px;top:376px;width:1px;height:21px;background:#e3eaf1"></div>
<div class="a" style="left:639px;top:376px;width:1px;height:21px;background:#e3eaf1"></div>
<div class="a" style="left:725px;top:376px;width:1px;height:21px;background:#e3eaf1"></div>
<div class="a" style="left:816px;top:376px;width:1px;height:21px;background:#e3eaf1"></div>
<div class="a" style="left:915px;top:376px;width:1px;height:21px;background:#e3eaf1"></div>
<div class="a" style="left:984px;top:376px;width:1px;height:21px;background:#e3eaf1"></div>
<div class="a" style="left:1176px;top:376px;width:1px;height:21px;background:#e3eaf1"></div>
<div class="t" style="left:179.60px;top:381.00px;font-size:12.6px;color:#00007a;font-weight:700;transform:scaleX(1.0849);transform-origin:0 0;">251</div>
<div class="a" style="left:225px;top:377.00px;width:225px;height:18.9px;overflow:hidden"><div class="t" style="left:2.80px;top:4px;font-size:12.6px;color:#03038c;font-weight:400;transform:scaleX(0.9470);transform-origin:0 0;">WBL GRAFICA E EDITORA LTDA</div></div>
<div class="t" style="left:457.23px;top:381.00px;font-size:12.6px;color:#03038c;font-weight:400;transform:scaleX(0.9760);transform-origin:0 0;">002432871</div>
<div class="t" style="left:534.74px;top:381.00px;font-size:12.6px;color:#03038c;font-weight:400;transform:scaleX(0.9760);transform-origin:0 0;">002</div>
<div class="t" style="left:569.75px;top:381.00px;font-size:12.6px;color:#03038c;font-weight:400;transform:scaleX(1.0233);transform-origin:0 0;">15/04/2025</div>
<div class="t" style="left:671.64px;top:381.00px;font-size:12.6px;color:#03038c;font-weight:400;transform:scaleX(0.9850);transform-origin:0 0;">R$ 82,98</div>
<div class="t" style="left:741.00px;top:381.00px;font-size:12.6px;color:#03038c;font-weight:400;transform:scaleX(1.0030);transform-origin:0 0;">Autorizada</div>
<div class="t" style="left:839.70px;top:381.00px;font-size:12.6px;color:#03038c;font-weight:400;transform:scaleX(0.9450);transform-origin:0 0;">Concluído</div>
<div class="t" style="left:938.80px;top:381.00px;font-size:12.6px;color:#f01010;font-weight:400;transform:scaleX(0.9433);transform-origin:0 0;">Não</div>
<div class="t" style="left:1006.80px;top:381.00px;font-size:12.6px;color:#03038c;font-weight:400;">Confirmação da Operação</div>
<div class="a" style="left:159px;top:397px;width:1017px;height:21px;background:#ffffff"></div>
<div class="a" style="left:158px;top:417px;width:1018px;height:1px;background:#e3eaf1"></div>
<div class="a" style="left:224px;top:397px;width:1px;height:21px;background:#e3eaf1"></div>
<div class="a" style="left:450px;top:397px;width:1px;height:21px;background:#e3eaf1"></div>
<div class="a" style="left:525px;top:397px;width:1px;height:21px;background:#e3eaf1"></div>
<div class="a" style="left:564px;top:397px;width:1px;height:21px;background:#e3eaf1"></div>
<div class="a" style="left:639px;top:397px;width:1px;height:21px;background:#e3eaf1"></div>
<div class="a" style="left:725px;top:397px;width:1px;height:21px;background:#e3eaf1"></div>
<div class="a" style="left:816px;top:397px;width:1px;height:21px;background:#e3eaf1"></div>
<div class="a" style="left:915px;top:397px;width:1px;height:21px;background:#e3eaf1"></div>
<div class="a" style="left:984px;top:397px;width:1px;height:21px;background:#e3eaf1"></div>
<div class="a" style="left:1176px;top:397px;width:1px;height:21px;background:#e3eaf1"></div>
<div class="t" style="left:179.60px;top:402.00px;font-size:12.6px;color:#00007a;font-weight:700;transform:scaleX(1.0849);transform-origin:0 0;">252</div>
<div class="a" style="left:225px;top:398.00px;width:225px;height:18.9px;overflow:hidden"><div class="t" style="left:2.80px;top:4px;font-size:12.6px;color:#03038c;font-weight:400;transform:scaleX(0.9470);transform-origin:0 0;">RM COMERCIO VAREJISTA LTDA</div></div>
<div class="t" style="left:457.23px;top:402.00px;font-size:12.6px;color:#03038c;font-weight:400;transform:scaleX(0.9760);transform-origin:0 0;">000097307</div>
<div class="t" style="left:534.74px;top:402.00px;font-size:12.6px;color:#03038c;font-weight:400;transform:scaleX(0.9760);transform-origin:0 0;">002</div>
<div class="t" style="left:569.75px;top:402.00px;font-size:12.6px;color:#03038c;font-weight:400;transform:scaleX(1.0233);transform-origin:0 0;">18/04/2025</div>
<div class="t" style="left:664.75px;top:402.00px;font-size:12.6px;color:#03038c;font-weight:400;transform:scaleX(0.9850);transform-origin:0 0;">R$ 449,69</div>
<div class="t" style="left:741.00px;top:402.00px;font-size:12.6px;color:#03038c;font-weight:400;transform:scaleX(1.0030);transform-origin:0 0;">Autorizada</div>
<div class="t" style="left:839.70px;top:402.00px;font-size:12.6px;color:#03038c;font-weight:400;transform:scaleX(0.9450);transform-origin:0 0;">Concluído</div>
<div class="t" style="left:938.80px;top:402.00px;font-size:12.6px;color:#f01010;font-weight:400;transform:scaleX(0.9433);transform-origin:0 0;">Não</div>
<div class="t" style="left:1006.80px;top:402.00px;font-size:12.6px;color:#03038c;font-weight:400;">Confirmação da Operação</div>
<div class="a" style="left:159px;top:418px;width:1017px;height:21px;background:#f4f4f4"></div>
<div class="a" style="left:158px;top:438px;width:1018px;height:1px;background:#e3eaf1"></div>
<div class="a" style="left:224px;top:418px;width:1px;height:21px;background:#e3eaf1"></div>
<div class="a" style="left:450px;top:418px;width:1px;height:21px;background:#e3eaf1"></div>
<div class="a" style="left:525px;top:418px;width:1px;height:21px;background:#e3eaf1"></div>
<div class="a" style="left:564px;top:418px;width:1px;height:21px;background:#e3eaf1"></div>
<div class="a" style="left:639px;top:418px;width:1px;height:21px;background:#e3eaf1"></div>
<div class="a" style="left:725px;top:418px;width:1px;height:21px;background:#e3eaf1"></div>
<div class="a" style="left:816px;top:418px;width:1px;height:21px;background:#e3eaf1"></div>
<div class="a" style="left:915px;top:418px;width:1px;height:21px;background:#e3eaf1"></div>
<div class="a" style="left:984px;top:418px;width:1px;height:21px;background:#e3eaf1"></div>
<div class="a" style="left:1176px;top:418px;width:1px;height:21px;background:#e3eaf1"></div>
<div class="t" style="left:179.60px;top:423.00px;font-size:12.6px;color:#00007a;font-weight:700;transform:scaleX(1.0849);transform-origin:0 0;">253</div>
<div class="a" style="left:225px;top:419.00px;width:225px;height:18.9px;overflow:hidden"><div class="t" style="left:2.80px;top:4px;font-size:12.6px;color:#03038c;font-weight:400;transform:scaleX(0.9470);transform-origin:0 0;">MERCADO PAGO INSTITUICAO DE PAGAMENTO LTDA</div></div>
<div class="t" style="left:457.23px;top:423.00px;font-size:12.6px;color:#03038c;font-weight:400;transform:scaleX(0.9760);transform-origin:0 0;">001308068</div>
<div class="t" style="left:534.74px;top:423.00px;font-size:12.6px;color:#03038c;font-weight:400;transform:scaleX(0.9760);transform-origin:0 0;">005</div>
<div class="t" style="left:569.75px;top:423.00px;font-size:12.6px;color:#03038c;font-weight:400;transform:scaleX(1.0233);transform-origin:0 0;">25/04/2025</div>
<div class="t" style="left:664.75px;top:423.00px;font-size:12.6px;color:#03038c;font-weight:400;transform:scaleX(0.9850);transform-origin:0 0;">R$ 374,70</div>
<div class="t" style="left:741.00px;top:423.00px;font-size:12.6px;color:#03038c;font-weight:400;transform:scaleX(1.0030);transform-origin:0 0;">Autorizada</div>
<div class="t" style="left:839.70px;top:423.00px;font-size:12.6px;color:#03038c;font-weight:400;transform:scaleX(0.9450);transform-origin:0 0;">Concluído</div>
<div class="t" style="left:938.80px;top:423.00px;font-size:12.6px;color:#f01010;font-weight:400;transform:scaleX(0.9433);transform-origin:0 0;">Não</div>
<div class="t" style="left:1006.80px;top:423.00px;font-size:12.6px;color:#03038c;font-weight:400;">Confirmação da Operação</div>
<div class="a" style="left:159px;top:439px;width:1017px;height:21px;background:#ffffff"></div>
<div class="a" style="left:158px;top:459px;width:1018px;height:1px;background:#e3eaf1"></div>
<div class="a" style="left:224px;top:439px;width:1px;height:21px;background:#e3eaf1"></div>
<div class="a" style="left:450px;top:439px;width:1px;height:21px;background:#e3eaf1"></div>
<div class="a" style="left:525px;top:439px;width:1px;height:21px;background:#e3eaf1"></div>
<div class="a" style="left:564px;top:439px;width:1px;height:21px;background:#e3eaf1"></div>
<div class="a" style="left:639px;top:439px;width:1px;height:21px;background:#e3eaf1"></div>
<div class="a" style="left:725px;top:439px;width:1px;height:21px;background:#e3eaf1"></div>
<div class="a" style="left:816px;top:439px;width:1px;height:21px;background:#e3eaf1"></div>
<div class="a" style="left:915px;top:439px;width:1px;height:21px;background:#e3eaf1"></div>
<div class="a" style="left:984px;top:439px;width:1px;height:21px;background:#e3eaf1"></div>
<div class="a" style="left:1176px;top:439px;width:1px;height:21px;background:#e3eaf1"></div>
<div class="t" style="left:179.60px;top:444.00px;font-size:12.6px;color:#00007a;font-weight:700;transform:scaleX(1.0849);transform-origin:0 0;">254</div>
<div class="a" style="left:225px;top:440.00px;width:225px;height:18.9px;overflow:hidden"><div class="t" style="left:2.80px;top:4px;font-size:12.6px;color:#03038c;font-weight:400;transform:scaleX(0.9470);transform-origin:0 0;">DELL COMPUTADORES DO BRASIL LTDA</div></div>
<div class="t" style="left:457.23px;top:444.00px;font-size:12.6px;color:#03038c;font-weight:400;transform:scaleX(0.9760);transform-origin:0 0;">007637358</div>
<div class="t" style="left:534.74px;top:444.00px;font-size:12.6px;color:#03038c;font-weight:400;transform:scaleX(0.9760);transform-origin:0 0;">001</div>
<div class="t" style="left:569.75px;top:444.00px;font-size:12.6px;color:#03038c;font-weight:400;transform:scaleX(1.0233);transform-origin:0 0;">12/05/2025</div>
<div class="t" style="left:654.40px;top:444.00px;font-size:12.6px;color:#03038c;font-weight:400;transform:scaleX(0.9850);transform-origin:0 0;">R$ 5.984,01</div>
<div class="t" style="left:741.00px;top:444.00px;font-size:12.6px;color:#03038c;font-weight:400;transform:scaleX(1.0030);transform-origin:0 0;">Autorizada</div>
<div class="t" style="left:839.70px;top:444.00px;font-size:12.6px;color:#03038c;font-weight:400;transform:scaleX(0.9450);transform-origin:0 0;">Concluído</div>
<div class="t" style="left:938.80px;top:444.00px;font-size:12.6px;color:#f01010;font-weight:400;transform:scaleX(0.9433);transform-origin:0 0;">Não</div>
<div class="t" style="left:1006.80px;top:444.00px;font-size:12.6px;color:#03038c;font-weight:400;">Confirmação da Operação</div>
<div class="a" style="left:159px;top:460px;width:1017px;height:21px;background:#f58c5f"></div>
<div class="a" style="left:224px;top:460px;width:1px;height:21px;background:#fbd2bf"></div>
<div class="a" style="left:450px;top:460px;width:1px;height:21px;background:#fbd2bf"></div>
<div class="a" style="left:525px;top:460px;width:1px;height:21px;background:#fbd2bf"></div>
<div class="a" style="left:564px;top:460px;width:1px;height:21px;background:#fbd2bf"></div>
<div class="a" style="left:639px;top:460px;width:1px;height:21px;background:#fbd2bf"></div>
<div class="a" style="left:725px;top:460px;width:1px;height:21px;background:#fbd2bf"></div>
<div class="a" style="left:816px;top:460px;width:1px;height:21px;background:#fbd2bf"></div>
<div class="a" style="left:915px;top:460px;width:1px;height:21px;background:#fbd2bf"></div>
<div class="a" style="left:984px;top:460px;width:1px;height:21px;background:#fbd2bf"></div>
<div class="t" style="left:179.60px;top:465.00px;font-size:12.6px;color:#fff;font-weight:700;transform:scaleX(1.0849);transform-origin:0 0;">255</div>
<div class="a" style="left:225px;top:461.00px;width:225px;height:18.9px;overflow:hidden"><div class="t" style="left:2.80px;top:4px;font-size:12.6px;color:#fff;font-weight:400;transform:scaleX(0.9470);transform-origin:0 0;">M E PINHO GAMA-ME</div></div>
<div class="t" style="left:457.23px;top:465.00px;font-size:12.6px;color:#fff;font-weight:400;transform:scaleX(0.9760);transform-origin:0 0;">000000799</div>
<div class="t" style="left:534.74px;top:465.00px;font-size:12.6px;color:#fff;font-weight:400;transform:scaleX(0.9760);transform-origin:0 0;">001</div>
<div class="t" style="left:569.75px;top:465.00px;font-size:12.6px;color:#fff;font-weight:400;transform:scaleX(1.0233);transform-origin:0 0;">29/05/2025</div>
<div class="t" style="left:654.40px;top:465.00px;font-size:12.6px;color:#fff;font-weight:400;transform:scaleX(0.9850);transform-origin:0 0;">R$ 6.275,00</div>
<div class="t" style="left:741.00px;top:465.00px;font-size:12.6px;color:#fff;font-weight:400;transform:scaleX(1.0030);transform-origin:0 0;">Autorizada</div>
<div class="t" style="left:839.70px;top:465.00px;font-size:12.6px;color:#fff;font-weight:400;transform:scaleX(0.9450);transform-origin:0 0;">Concluído</div>
<div class="t" style="left:938.80px;top:465.00px;font-size:12.6px;color:#fff;font-weight:400;transform:scaleX(0.9433);transform-origin:0 0;">Não</div>
<div class="t" style="left:1006.80px;top:465.00px;font-size:12.6px;color:#fff;font-weight:400;">Confirmação da Operação</div>
<svg style="left:151px;top:465px" width="6" height="10"><path d="M0 0.7L5.2 5 0 9.3z" fill="#15294e"/></svg>
<div class="a" style="left:984px;top:459px;width:192px;height:21px;border:1px solid #ffffff"></div>
<div class="a" style="left:981px;top:456px;width:198px;height:28px;border:3px solid #e3131b"></div>
<div class="a" style="left:1188px;top:271px;width:17px;height:279px;background:linear-gradient(90deg,#a7bfd5,#b5cadd 50%,#bccfe0)"></div>
<div class="a" style="left:1188px;top:271px;width:17px;height:17px;border:1px solid #93b3ce;border-radius:4px;background:linear-gradient(90deg,#e8eff5,#d0dfea);box-shadow:inset 0 0 0 1px rgba(255,255,255,0.5)"></div>
<div class="a" style="left:1188px;top:403px;width:17px;height:130px;border:1px solid #93b3ce;border-radius:4px;background:linear-gradient(90deg,#e8eff5,#d0dfea);box-shadow:inset 0 0 0 1px rgba(255,255,255,0.5)"></div>
<div class="a" style="left:1188px;top:533px;width:17px;height:17px;border:1px solid #93b3ce;border-radius:4px;background:linear-gradient(90deg,#e8eff5,#d0dfea);box-shadow:inset 0 0 0 1px rgba(255,255,255,0.5)"></div>
<svg style="left:1192px;top:277px" width="9" height="5"><path d="M0.5 4.5L4.5 0.5 8.5 4.5z" fill="#3b6a99"/></svg>
<svg style="left:1192px;top:539px" width="9" height="5"><path d="M0.5 0.5L4.5 4.5 8.5 0.5z" fill="#3b6a99"/></svg>
<div class="a" style="left:1194px;top:466px;width:6px;height:1px;background:#7f9fbd"></div>
<div class="a" style="left:1194px;top:469px;width:6px;height:1px;background:#7f9fbd"></div>
<div class="a" style="left:146px;top:551px;width:1059px;height:3px;background:#fff"></div>
<div class="a" style="left:147px;top:554px;width:1058px;height:136px;background:#e1e8f0"></div>
<div class="t" style="left:156.70px;top:560.00px;font-size:15.3px;color:#4a6f9a;font-weight:400;transform:scaleX(0.8928);transform-origin:0 0;">CNPJ Fornecedor</div>
<div class="t" style="left:316.30px;top:560.00px;font-size:15.3px;color:#4a6f9a;font-weight:400;transform:scaleX(0.9373);transform-origin:0 0;">Chave de Acesso</div>
<div class="t" style="left:706.40px;top:560.00px;font-size:15.3px;color:#4a6f9a;font-weight:400;transform:scaleX(0.8236);transform-origin:0 0;">NSU</div>
<div class="a" style="left:157px;top:578px;width:148px;height:24px;background:#d9def0;border:1px solid #95b5cf"></div>
<div class="t" style="left:158.20px;top:582.00px;font-size:15.6px;color:#000;font-weight:400;transform:scaleX(0.9484);transform-origin:0 0;">04.795.022/0001-46</div>
<div class="a" style="left:317px;top:578px;width:378px;height:24px;background:#d9def0;border:1px solid #95b5cf"></div>
<div class="t" style="left:318.40px;top:582.00px;font-size:15.6px;color:#000;font-weight:400;transform:scaleX(0.9193);transform-origin:0 0;">13250504795022000146550010000007991496387591</div>
<div class="a" style="left:707px;top:578px;width:148px;height:24px;background:#d9def0;border:1px solid #95b5cf"></div>
<div class="t" style="left:708.90px;top:582.00px;font-size:15.6px;color:#000;font-weight:400;transform:scaleX(0.9147);transform-origin:0 0;">000000000010833</div>
<div class="a" style="left:147px;top:625px;width:861px;height:1px;background:#a9c0d6"></div>
<div class="a" style="left:147px;top:626px;width:861px;height:1px;background:#f4f7fa"></div>
<div class="a" style="left:147px;top:625px;width:1px;height:65px;background:#a9c0d6"></div>
<div class="a" style="left:147px;top:669px;width:861px;height:1px;background:#a9c0d6"></div>
<div class="a" style="left:148px;top:670px;width:860px;height:1px;background:#f4f7fa"></div>
<div class="a" style="left:147px;top:689px;width:861px;height:1px;background:#f4f7fa"></div>
<div class="t" style="left:157.50px;top:634.00px;font-size:9.8px;color:#2f4f86;font-weight:400;transform:scaleX(0.9492);transform-origin:0 0;">*Caso o XML não seja disponibilizado para download pela SEFAZ imediatamente, o arquivo ficará como Download XML Pendente.</div>
<div class="t" style="left:157.50px;top:645.00px;font-size:9.8px;color:#2f4f86;font-weight:400;transform:scaleX(0.9487);transform-origin:0 0;">A SEFAZ poderá levar até alguns dias para liberar. Para verificar novamente clique em Baixar XML.</div>
<div class="t" style="left:157.60px;top:674.00px;font-size:11.4px;color:#3b5b80;font-weight:400;transform:scaleX(0.9404);transform-origin:0 0;">Última Consulta realizada na SEFAZ: <span style="color:#8a1b1b">06/06/2025 14:43:47</span></div>
<div class="a" style="left:1010px;top:554px;width:1px;height:136px;background:#a9c0d6"></div>
<div class="a" style="left:1011px;top:554px;width:1px;height:136px;background:#f4f7fa"></div>
<div class="t" style="left:1031.50px;top:560.00px;font-size:15.3px;color:#4a6f9a;font-weight:400;transform:scaleX(0.9395);transform-origin:0 0;">Manifestar</div>
<div class="a" style="left:1032px;top:578px;width:148px;height:28px;border:1px solid #7fa8c9;border-radius:4px;background:linear-gradient(#dae9f2,#cde0ec 50%,#b5d0e3);box-shadow:inset 0 1px 0 #f0f6fa"></div>
<div class="t" style="left:1056.20px;top:585.00px;font-size:15.5px;color:#000;font-weight:400;transform:scaleX(0.9155);transform-origin:0 0;">Confirmar</div>
<div class="a" style="left:1032px;top:613px;width:148px;height:28px;border:1px solid #7fa8c9;border-radius:4px;background:linear-gradient(#dae9f2,#cde0ec 50%,#b5d0e3);box-shadow:inset 0 1px 0 #f0f6fa"></div>
<div class="t" style="left:1056.20px;top:620.00px;font-size:15.5px;color:#000;font-weight:400;transform:scaleX(0.9121);transform-origin:0 0;">Desconhecer</div>
<div class="a" style="left:1032px;top:648px;width:148px;height:28px;border:1px solid #7fa8c9;border-radius:4px;background:linear-gradient(#dae9f2,#cde0ec 50%,#b5d0e3);box-shadow:inset 0 1px 0 #f0f6fa"></div>
<div class="t" style="left:1056.20px;top:655.00px;font-size:15.5px;color:#000;font-weight:400;transform:scaleX(0.9032);transform-origin:0 0;">Não realizada</div>
<svg style="left:195px;top:150px" width="40" height="35" viewBox="0 0 40 35">
<circle cx="20.4" cy="17.5" r="11" fill="#fff" stroke="#6e6e6e" stroke-width="1.4"/>
<circle cx="20.4" cy="17.5" r="7.8" fill="#4cb848" stroke="#8a8a8a" stroke-width="0.8"/>
<path d="M15 13a7 5 0 0 1 10 0" fill="#7fd07a" opacity="0.6"/>
<path d="M19.2 12h2.6v5.6h3.4L20.5 23 15.8 17.6h3.4z" fill="#fff"/>
</svg>
<svg style="left:330px;top:150px" width="40" height="35" viewBox="0 0 40 35">
<rect x="12.3" y="9.1" width="15.4" height="16.4" fill="#fbfdfe" stroke="#6f8aa0" stroke-width="1"/>
<path d="M12.5 25.3h15" stroke="#4a5560" stroke-width="1.2"/>
<rect x="15.2" y="11" width="4.4" height="1.2" fill="#333"/>
<rect x="15" y="12" width="10" height="0.9" fill="#4a78d0"/>
<rect x="15" y="14" width="10" height="9" fill="#3d9a5a"/>
<rect x="15" y="14" width="1.2" height="4" fill="#d02828"/>
<rect x="16.2" y="14" width="1.8" height="4" fill="#6a9ae0"/>
<rect x="18.1" y="15.2" width="5" height="2" fill="#cfd6da"/>
<rect x="18.1" y="18.3" width="5" height="2.2" fill="#cfd6da"/>
<rect x="18" y="20.8" width="7" height="1.2" fill="#c81010"/>
<rect x="18" y="22" width="7" height="1" fill="#6a9ae0"/>
</svg>
<svg style="left:470px;top:150px" width="40" height="35" viewBox="0 0 40 35">
<rect x="10.3" y="7.3" width="11.5" height="18" fill="#f4f8fc" stroke="#7aa0c0" stroke-width="1"/>
<path d="M10.3 25.3h11.5" stroke="#777" stroke-width="1.3"/>
<path d="M22.5 22.5L29 28.8" stroke="#8a6a18" stroke-width="3.8" stroke-linecap="round"/>
<path d="M22.5 22.5L29 28.8" stroke="#d9b660" stroke-width="2.2" stroke-linecap="round"/>
<circle cx="20" cy="16.6" r="5.4" fill="#a8cbe4" stroke="#7b6a48" stroke-width="1.1"/>
<circle cx="18.6" cy="17.6" r="1.3" fill="#fff"/>
</svg>
<svg style="left:605px;top:150px" width="40" height="35" viewBox="0 0 40 35">
<rect x="12" y="9" width="15.9" height="16.8" rx="1" fill="#1c1c1c"/>
<rect x="13" y="10" width="2" height="15" fill="#555"/>
<rect x="15.7" y="9.8" width="9.3" height="5" fill="#d6e4ee"/>
<rect x="21.3" y="11" width="1.6" height="2.6" fill="#333"/>
<rect x="14.9" y="17.9" width="10.1" height="7.1" fill="#fff"/>
<path d="M16.2 19.6h7.6M16.2 21.5h7.6M16.2 23.4h7.6" stroke="#aaa" stroke-width="0.8"/>
</svg>
<svg style="left:740px;top:150px" width="40" height="35" viewBox="0 0 40 35">
<rect x="18.3" y="8.2" width="11.2" height="17.8" fill="#f4f9fd" stroke="#6b90b0" stroke-width="1"/>
<path d="M27 26h3" stroke="#566" stroke-width="1.2"/>
<path d="M12.3 14.5h6.5l1.3-2h5.3q1.3 0 1.3 1.3V25.5H12.3z" fill="#f6e040" stroke="#d89a20" stroke-width="0.9"/>
<path d="M9.2 16.3h9l1.5 1.2h4.2l1.8 9.5H11z" fill="#f2b81a" stroke="#d08a10" stroke-width="0.9"/>
<rect x="12" y="19" width="5" height="2" rx="0.8" fill="#fff"/>
</svg>
<svg style="left:1133px;top:160px" width="16" height="16"><path d="M3.8 3.8L12.2 12.2M12.2 3.8L3.8 12.2" stroke="#a00000" stroke-width="3.8" stroke-linecap="round"/><path d="M3.8 3.8L12.2 12.2M12.2 3.8L3.8 12.2" stroke="#f42010" stroke-width="2.3" stroke-linecap="round"/></svg>
<svg style="left:1035px;top:584px" width="18" height="16"><path d="M3 8.3L7 12.3 15 4.3" fill="none" stroke="#2a8a14" stroke-width="4.4" stroke-linejoin="round" stroke-linecap="round"/><path d="M3 8.3L7 12.3 15 4.3" fill="none" stroke="#6cd13a" stroke-width="2.4" stroke-linejoin="round" stroke-linecap="round"/></svg>
<svg style="left:1035px;top:617.7px" width="18" height="18"><circle cx="9" cy="9" r="6.6" fill="#f2f2f2" stroke="#777" stroke-width="1.1"/><circle cx="9" cy="9" r="4.6" fill="#e0203a"/><rect x="5.7" y="8" width="6.6" height="2.1" fill="#fff"/></svg>
<svg style="left:1035px;top:653.4px" width="18" height="18"><circle cx="9" cy="9" r="6.6" fill="#f2f2f2" stroke="#777" stroke-width="1.1"/><circle cx="9" cy="9" r="4.6" fill="#e0203a"/><path d="M7 7L11 11M11 7L7 11" stroke="#fff" stroke-width="1.6"/></svg>
<div class="a" style="left:0px;top:697px;width:1363px;height:1px;background:#fff"></div>
<div class="a" style="left:0px;top:698px;width:1363px;height:2px;background:#95b1cb"></div>
<div class="a" style="left:0px;top:700px;width:1363px;height:15px;background:#e0e8f0"></div>
<div class="a" style="left:119px;top:700px;width:1px;height:15px;background:#fff"></div>
<div class="a" style="left:120px;top:700px;width:1px;height:15px;background:#95b1cb"></div>
<div class="a" style="left:470px;top:700px;width:1px;height:15px;background:#fff"></div>
<div class="a" style="left:471px;top:700px;width:1px;height:15px;background:#95b1cb"></div>
<div class="a" style="left:670px;top:700px;width:1px;height:15px;background:#fff"></div>
<div class="a" style="left:671px;top:700px;width:1px;height:15px;background:#95b1cb"></div>
<div class="a" style="left:905px;top:700px;width:1px;height:15px;background:#fff"></div>
<div class="a" style="left:906px;top:700px;width:1px;height:15px;background:#95b1cb"></div>
<div class="a" style="left:1226px;top:700px;width:1px;height:15px;background:#fff"></div>
<div class="a" style="left:1227px;top:700px;width:1px;height:15px;background:#95b1cb"></div>
<div class="t" style="left:3.50px;top:703.00px;font-size:12.8px;color:#2a5487;font-weight:400;transform:scaleX(1.0090);transform-origin:0 0;">Versão: 2025.06.27</div>
<div class="a" style="left:121px;top:699.00px;width:349px;height:19.2px;overflow:hidden"><div class="t" style="left:1.00px;top:4px;font-size:12.8px;color:#2a5487;font-weight:400;transform:scaleX(1.0100);transform-origin:0 0;">localhost/3050:C:\Testes<span style="position:relative;top:-2px">_</span>Instalacoes\Datacaixa<span style="position:relative;top:-2px">_</span>Fiscal\BD\BASE.FDB</div></div>
<div class="t" style="left:521.60px;top:703.00px;font-size:12.8px;color:#2a5487;font-weight:400;transform:scaleX(0.9934);transform-origin:0 0;">Usuário: carolina</div>
<div class="t" style="left:684.00px;top:703.00px;font-size:12.8px;color:#2a5487;font-weight:400;transform:scaleX(1.0211);transform-origin:0 0;">Validade do Certificado: 10/01/2026</div>
<svg style="left:1228px;top:698px" width="24" height="17"><path d="M15.5 15.2H9.8C7.5 15.2 6.2 13.2 6.2 11.2 6.2 9 7.8 7.6 10 7.4 10.6 5.4 12 4.3 13.8 4.3 15.6 4.3 16.5 5.5 16.9 7.8 18.8 7.6 20 8.2 20.8 9.2" fill="none" stroke="#d40000" stroke-width="1.6"/><path d="M17.6 11.6L21 15.2M21 11.6L17.6 15.2" stroke="#d40000" stroke-width="1.7"/></svg>
<div class="t" style="left:1254.00px;top:703.00px;font-size:12.8px;color:#2a5487;font-weight:400;transform:scaleX(0.9610);transform-origin:0 0;">Backup Nuvem</div></body></html>
